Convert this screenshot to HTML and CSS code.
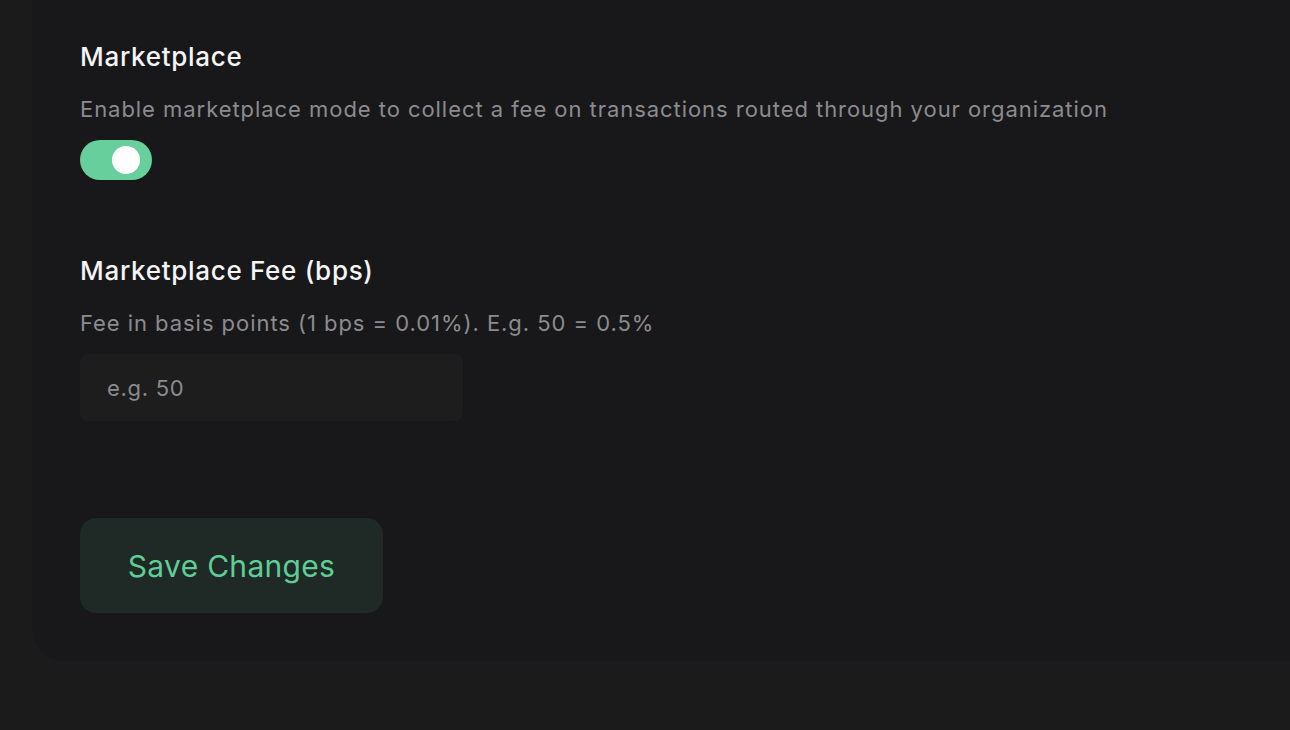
FILE: index.html
```html
<!DOCTYPE html>
<html lang="en">
<head>
    <meta charset="UTF-8">
    <meta name="viewport" content="width=device-width, initial-scale=1.0">
    <title>Organization Settings</title>
    <link rel="stylesheet" href="styles.css">
</head>
<body>
    <main class="card">
        <section class="field">
            <h2 class="field-title">Marketplace</h2>
            <p class="field-desc">Enable marketplace mode to collect a fee on transactions routed through your organization</p>
            <button class="toggle is-on" type="button" aria-pressed="true"><span class="knob"></span></button>
        </section>

        <section class="field">
            <h2 class="field-title">Marketplace Fee (bps)</h2>
            <p class="field-desc">Fee in basis points (1 bps = 0.01%). E.g. 50 = 0.5%</p>
            <input class="text-input" type="text" placeholder="e.g. 50">
        </section>

        <button class="save-btn" type="button">Save Changes</button>
    </main>
</body>
</html>
```

FILE: styles.css
```css
body {
    margin: 0;
    padding: 0 0 69px 32px;
    background-color: #1b1b1b;
    font-family: Inter, "Noto Sans", Arial, sans-serif;
}
.card {
    background-color: #18181a;
    border-bottom-left-radius: 32px;
    padding: 41px 48px 48px 48px;
    display: flex;
    flex-direction: column;
    align-items: flex-start;
}
.field {
    display: flex;
    flex-direction: column;
    align-items: flex-start;
}
.field + .field {
    margin-top: 75px;
}
.field-title {
    margin: 0;
    font-size: 26px;
    line-height: 32px;
    font-weight: 500;
    letter-spacing: 0.7px;
    color: #f4f4f5;
}
.field-desc {
    margin: 21px 0 16px 0;
    font-size: 22px;
    line-height: 30px;
    letter-spacing: 0.95px;
    color: #8b8b90;
}
.toggle {
    width: 72px;
    height: 40px;
    border: none;
    border-radius: 20px;
    padding: 0;
    background-color: #3f3f46;
    position: relative;
    cursor: pointer;
}
.toggle.is-on {
    background-color: #66cf9c;
}
.knob {
    position: absolute;
    top: 6px;
    left: 32px;
    width: 28px;
    height: 28px;
    border-radius: 50%;
    background-color: #fff;
}
.text-input {
    width: 383px;
    height: 67px;
    box-sizing: border-box;
    border: none;
    border-radius: 8px;
    background-color: #1d1d1e;
    padding: 0 27px;
    font-family: inherit;
    font-size: 22px;
    letter-spacing: 0.7px;
    color: #e4e4e7;
    outline: none;
}
.text-input::placeholder {
    color: #8b8b90;
}
.save-btn {
    margin-top: 97px;
    width: 303px;
    height: 95px;
    border: none;
    border-radius: 16px;
    background-color: #1f2926;
    color: #5fcd96;
    font-family: inherit;
    font-size: 30px;
    letter-spacing: 0.3px;
    cursor: pointer;
}
```
